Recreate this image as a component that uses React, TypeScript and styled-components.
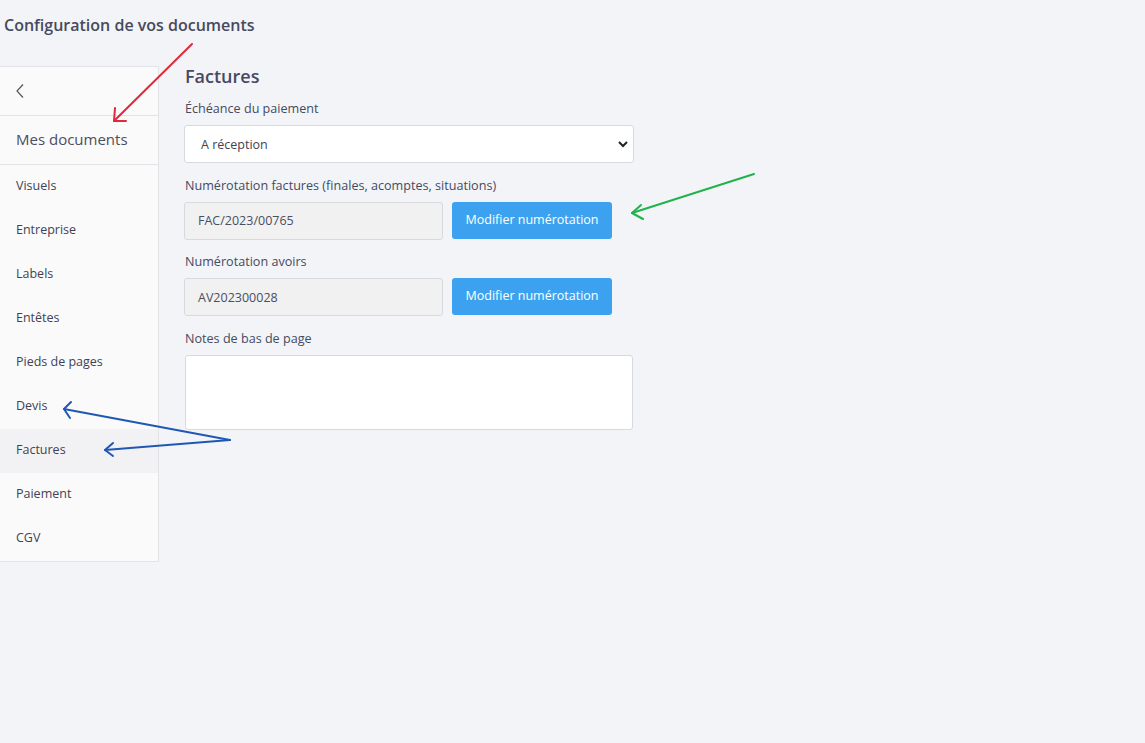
import React from "react";
import styled, { createGlobalStyle } from "styled-components";

const Global = createGlobalStyle`
  html, body { margin: 0; padding: 0; background: #f3f4f8; }
  body { font-family: "Open Sans", "Noto Sans", sans-serif; color: #3f4254; }
  * { box-sizing: border-box; }
`;

const Page = styled.div`
  position: relative;
  width: 1145px;
  height: 743px;
  background: #f3f4f8;
`;

const Title = styled.h1`
  margin: 0;
  padding: 14px 0 0 4px;
  height: 66px;
  font-size: 16px;
  line-height: 22px;
  font-weight: 600;
  color: #464a5e;
`;

const Body = styled.div`
  display: flex;
  align-items: flex-start;
`;

const Sidebar = styled.nav`
  width: 159px;
  background: #fafafa;
  border: 1px solid #e2e3e6;
  border-left: none;
  display: flex;
  flex-direction: column;
`;

const BackRow = styled.div`
  height: 49px;
  border-bottom: 1px solid #e2e3e6;
  display: flex;
  align-items: center;
  padding-left: 15px;
`;

const SideTitle = styled.div`
  height: 49px;
  border-bottom: 1px solid #e2e3e6;
  display: flex;
  align-items: center;
  padding: 0 0 2px 16px;
  font-size: 15px;
  color: #4a4e5e;
`;

const NavItem = styled.div<{ $active?: boolean }>`
  height: 44px;
  display: flex;
  align-items: center;
  padding: 0 0 3px 16px;
  font-size: 12.5px;
  color: #3f4254;
  background: ${(p) => (p.$active ? "#f2f2f4" : "transparent")};
`;

const Main = styled.main`
  flex: 1;
  padding-left: 25px;
`;

const Heading = styled.h2`
  margin: 0 0 13px 1px;
  font-size: 18px;
  line-height: 20px;
  font-weight: 600;
  color: #464a5e;
`;

const Field = styled.div`
  margin-bottom: 12.5px;
`;

const Label = styled.div`
  margin: 0 0 7px 1px;
  padding-top: 1px;
  font-size: 12.6px;
  line-height: 18px;
  color: #464a5e;
`;

const SelectBox = styled.div`
  position: relative;
  width: 450px;
  height: 38px;
  background: #fff;
  border: 1px solid #d7d9de;
  border-radius: 3px;
  display: flex;
  align-items: center;
  padding-left: 16px;
  font-size: 12.5px;
  color: #3f4254;
`;

const Caret = styled.svg`
  position: absolute;
  right: 4px;
  top: 14px;
`;

const Row = styled.div`
  display: flex;
  gap: 9px;
`;

const ReadOnly = styled.div`
  width: 259px;
  height: 38px;
  background: #f1f1f2;
  border: 1px solid #d7d9de;
  border-radius: 3px;
  display: flex;
  align-items: center;
  padding-left: 13px;
  font-size: 12.5px;
  color: #4a4e5e;
`;

const Button = styled.button`
  width: 160px;
  height: 37px;
  background: #3ca2f0;
  border: none;
  border-radius: 3px;
  color: #fff;
  font-family: "Open Sans", sans-serif;
  font-size: 12.5px;
  font-weight: 500;
  padding: 0 0 2px;
`;

const TextArea = styled.div`
  margin-left: 1px;
  width: 448px;
  height: 75px;
  background: #fff;
  border: 1px solid #d7d9de;
  border-radius: 3px;
`;

const Overlay = styled.svg`
  position: absolute;
  left: 0;
  top: 0;
  pointer-events: none;
`;

const items = ["Visuels", "Entreprise", "Labels", "Entêtes", "Pieds de pages", "Devis", "Factures", "Paiement", "CGV"];

export default function App() {
  return (
    <Page>
      <Global />
      <Title>Configuration de vos documents</Title>
      <Body>
        <Sidebar>
          <BackRow>
            <svg width="10" height="16" viewBox="0 0 10 16">
              <path d="M8 1.5 L2 8 L8 14.5" fill="none" stroke="#555" strokeWidth="1.2" />
            </svg>
          </BackRow>
          <SideTitle>Mes documents</SideTitle>
          {items.map((it) => (
            <NavItem key={it} $active={it === "Factures"}>
              {it}
            </NavItem>
          ))}
        </Sidebar>
        <Main>
          <Heading>Factures</Heading>
          <Field>
            <Label>Échéance du paiement</Label>
            <SelectBox>
              A réception
              <Caret width="12" height="9" viewBox="0 0 12 9">
                <path d="M2 2 L6 6 L10 2" fill="none" stroke="#222" strokeWidth="2" />
              </Caret>
            </SelectBox>
          </Field>
          <Field>
            <Label>Numérotation factures (finales, acomptes, situations)</Label>
            <Row>
              <ReadOnly>FAC/2023/00765</ReadOnly>
              <Button>Modifier numérotation</Button>
            </Row>
          </Field>
          <Field>
            <Label>Numérotation avoirs</Label>
            <Row>
              <ReadOnly>AV202300028</ReadOnly>
              <Button>Modifier numérotation</Button>
            </Row>
          </Field>
          <Field>
            <Label>Notes de bas de page</Label>
            <TextArea />
          </Field>
        </Main>
      </Body>
      <Overlay width="1145" height="743" viewBox="0 0 1145 743">
        <g fill="none" strokeWidth="2" strokeLinecap="round" strokeLinejoin="round">
          <g stroke="#e0293a">
            <path d="M192 44 L114 121" />
            <path d="M115 108 L114 121 L126 121" />
          </g>
          <g stroke="#21b24b">
            <path d="M754 174 L632 213" />
            <path d="M641 205 L632 213 L643 219" />
          </g>
          <g stroke="#1f58b4">
            <path d="M230 440 L64 409" />
            <path d="M71 402 L64 409 L70 418" />
            <path d="M230 440 L105 450" />
            <path d="M113 443 L105 450 L113 456" />
          </g>
        </g>
      </Overlay>
    </Page>
  );
}
